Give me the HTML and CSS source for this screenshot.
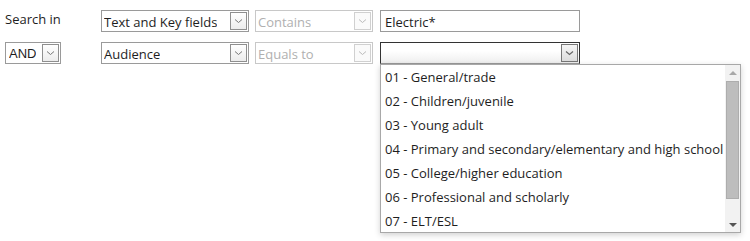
FILE: index.html
```html
<html>
<head>
    <link rel="stylesheet" href="styles.css">
</head>
<body>
    <div class="search">
        <div class="row">
            <div class="label">Search in</div>
            <div class="select field-wide">
                <span class="value">Text and Key fields</span>
                <span class="arrow"><svg width="9" height="6" viewBox="0 0 9 6"><path d="M1 1.5 L4.5 4.5 L8 1.5" fill="none" stroke="#777" stroke-width="1"/></svg></span>
            </div>
            <div class="select field-op disabled">
                <span class="value">Contains</span>
                <span class="arrow"><svg width="9" height="6" viewBox="0 0 9 6"><path d="M1 1.5 L4.5 4.5 L8 1.5" fill="none" stroke="#bbb" stroke-width="1"/></svg></span>
            </div>
            <div class="input">Electric*</div>
        </div>
        <div class="row">
            <div class="label">
                <div class="select field-and">
                    <span class="value">AND</span>
                    <span class="arrow"><svg width="9" height="6" viewBox="0 0 9 6"><path d="M1 1.5 L4.5 4.5 L8 1.5" fill="none" stroke="#777" stroke-width="1"/></svg></span>
                </div>
            </div>
            <div class="select field-wide">
                <span class="value">Audience</span>
                <span class="arrow"><svg width="9" height="6" viewBox="0 0 9 6"><path d="M1 1.5 L4.5 4.5 L8 1.5" fill="none" stroke="#777" stroke-width="1"/></svg></span>
            </div>
            <div class="select field-op disabled">
                <span class="value">Equals to</span>
                <span class="arrow"><svg width="9" height="6" viewBox="0 0 9 6"><path d="M1 1.5 L4.5 4.5 L8 1.5" fill="none" stroke="#bbb" stroke-width="1"/></svg></span>
            </div>
            <div class="select field-value open">
                <span class="value"></span>
                <span class="arrow"><svg width="9" height="6" viewBox="0 0 9 6"><path d="M1 1.5 L4.5 4.5 L8 1.5" fill="none" stroke="#666" stroke-width="1.2"/></svg></span>
                <div class="dropdown">
                    <ul class="options">
                        <li>01 - General/trade</li>
                        <li>02 - Children/juvenile</li>
                        <li>03 - Young adult</li>
                        <li>04 - Primary and secondary/elementary and high school</li>
                        <li>05 - College/higher education</li>
                        <li>06 - Professional and scholarly</li>
                        <li>07 - ELT/ESL</li>
                    </ul>
                    <div class="scrollbar">
                        <span class="tri up"></span>
                        <span class="thumb"></span>
                        <span class="tri down"></span>
                    </div>
                </div>
            </div>
        </div>
    </div>
</body>
</html>
```

FILE: styles.css
```css
body {
    margin: 0;
    padding: 10px 5px;
    font-family: "Open Sans", "DejaVu Sans", sans-serif;
    font-size: 13px;
    color: #1e1e1e;
    background: #ffffff;
}
.search {
    display: flex;
    flex-direction: column;
    gap: 10px;
}
.row {
    display: flex;
    align-items: flex-start;
    height: 22px;
}
.label {
    width: 96px;
    line-height: 20px;
    margin-top: -1px;
}
.select {
    box-sizing: border-box;
    height: 22px;
    border: 1px solid #9a9a9a;
    background: #fff;
    display: flex;
    align-items: center;
    justify-content: space-between;
    padding-left: 2px;
    position: relative;
}
.select .value {
    white-space: nowrap;
    overflow: hidden;
    line-height: 20px;
    padding-top: 2px;
}
.select .arrow {
    box-sizing: border-box;
    width: 17px;
    height: 18px;
    margin-right: 1px;
    border: 1px solid #8f8f8f;
    background: linear-gradient(#ffffff, #ececec);
    display: flex;
    align-items: center;
    justify-content: center;
    flex-shrink: 0;
}
.field-wide {
    width: 148px;
}
.field-op {
    width: 118px;
    margin-left: 6px;
}
.field-and {
    width: 56px;
    margin-top: 1px;
    padding-left: 3px;
}
.field-and .value {
    font-family: "Liberation Sans", Arial, sans-serif;
}
.disabled {
    border-color: #c8c8c8;
    color: #b0b0b0;
}
.disabled .arrow {
    border-color: #d0d0d0;
    background: #fafafa;
}
.input {
    box-sizing: border-box;
    width: 200px;
    height: 22px;
    margin-left: 7px;
    border: 1px solid #9a9a9a;
    padding: 1px 0 0 4px;
    line-height: 20px;
}
.field-value {
    width: 200px;
    margin-left: 7px;
}
.open {
    border-color: #333;
    border-bottom-color: #999;
    background: linear-gradient(#ffffff 40%, #eeeeee);
}
.open .arrow {
    border-color: #777;
    background: linear-gradient(#f6f6f6, #dcdcdc);
}
.dropdown {
    position: absolute;
    left: -1px;
    top: 21px;
    width: 361px;
    height: 169px;
    box-sizing: border-box;
    border: 1px solid #a8a8a8;
    background: #fff;
    box-shadow: 0px 2px 6px rgba(0, 0, 0, 0.18);
    display: flex;
    z-index: 10;
}
.options {
    list-style: none;
    margin: 0;
    padding: 0;
    flex: 1;
}
.options li {
    height: 24px;
    line-height: 24px;
    padding-left: 4px;
    white-space: nowrap;
}
.scrollbar {
    width: 15px;
    background: #f2f2f2;
    display: flex;
    flex-direction: column;
    align-items: center;
}
.thumb {
    width: 13px;
    height: 118px;
    box-sizing: border-box;
    background: #bdbdbd;
    border: 1px solid #adadad;
}
.tri {
    width: 0;
    height: 0;
    border-left: 4px solid transparent;
    border-right: 4px solid transparent;
}
.up {
    border-bottom: 4px solid #a8a8a8;
    margin: 6px 0 6px;
}
.down {
    border-top: 4px solid #555;
    margin-top: auto;
    margin-bottom: 5px;
}
```
